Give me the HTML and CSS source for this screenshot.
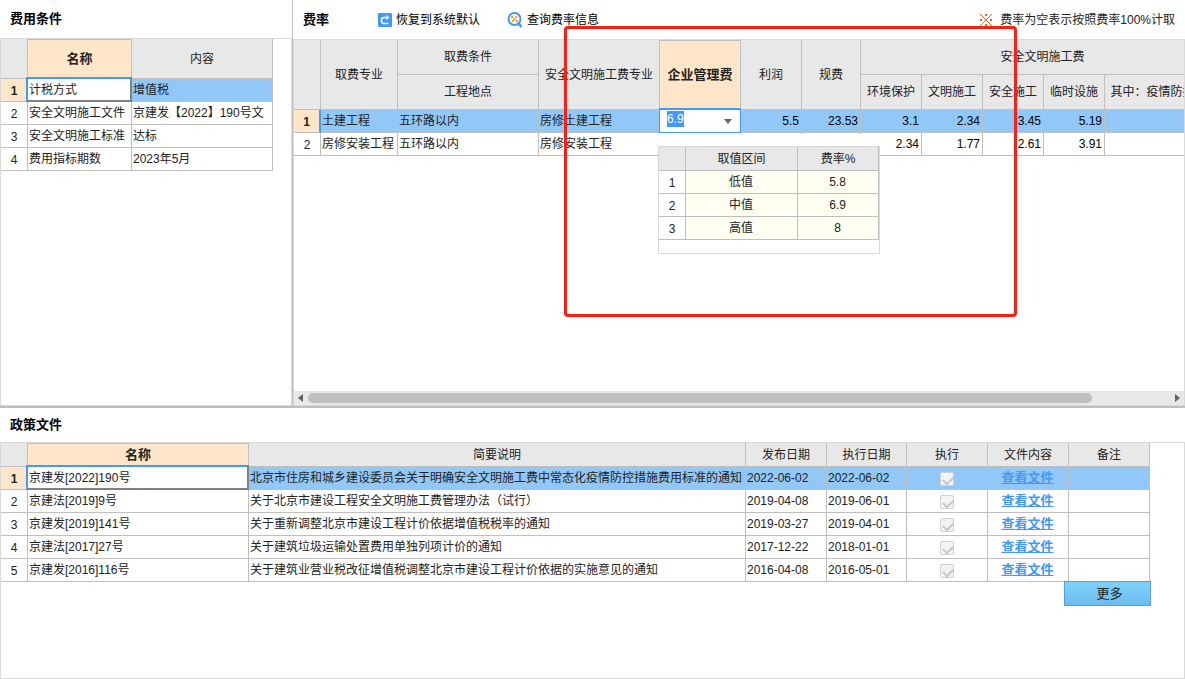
FILE: index.html
```html
<!DOCTYPE html>
<html lang="zh-CN">
<head>
<meta charset="utf-8">
<title>费用条件</title>
<link rel="stylesheet" href="styles.css">
</head>
<body>
<div class="page">
  <div class="top">
    <section class="pane">
      <header class="pane-head pane-head-cond"><h2>费用条件</h2></header>
      <div class="box">
        <table class="grid cond">
          <colgroup><col class="w-no"><col class="w-104"><col class="w-141"></colgroup>
          <thead><tr><th></th><th class="current">名称</th><th>内容</th></tr></thead>
          <tbody>
            <tr class="selected"><th scope="row">1</th><td class="focus">计税方式</td><td>增值税</td></tr>
            <tr><th scope="row">2</th><td>安全文明施工文件</td><td>京建发【2022】190号文</td></tr>
            <tr><th scope="row">3</th><td>安全文明施工标准</td><td>达标</td></tr>
            <tr><th scope="row">4</th><td>费用指标期数</td><td>2023年5月</td></tr>
          </tbody>
        </table>
      </div>
    </section>

    <section class="pane rates">
      <header class="pane-head pane-head-rate">
        <h2>费率</h2>
        <button class="tool tool-reset" type="button">
          <svg width="14" height="14" viewBox="0 0 14 14" aria-hidden="true"><rect width="14" height="14" rx="1" fill="#4398fc"/><path d="M10.500 10.500H5.500A2.500 2.500 0 0 1 3.500 8V7A2.500 2.500 0 0 1 6 4.500H10" fill="none" stroke="#fff" stroke-width="1.500"/><path d="M8.500 2 11.500 4.500 8.500 7z" fill="#fff"/></svg>
          恢复到系统默认
        </button>
        <button class="tool" type="button">
          <svg width="16" height="16" viewBox="0 0 16 16" aria-hidden="true"><circle cx="7.500" cy="7" r="6" fill="#fff" stroke="#4398fc" stroke-width="2"/><path d="M11.500 11.500 14.500 15" stroke="#4398fc" stroke-width="2.400"/><path d="M10 4 5 10" stroke="#ff9a1f" stroke-width="1.400"/><circle cx="5.300" cy="5" r="1.300" fill="#ff9a1f"/><circle cx="9.800" cy="9" r="1.300" fill="#ff9a1f"/></svg>
          查询费率信息
        </button>
        <p class="note">
          <svg width="14" height="14" viewBox="0 0 14 14" aria-hidden="true"><path d="M1 1l12 12M13 1l-12 12" stroke="#f4631e" stroke-width="1"/><path d="M6 1h2v2H6zM6 11h2v2H6zM1 6h2v2H1zM11 6h2v2h-2z" fill="#f4631e"/></svg>
          费率为空表示按照费率100%计取
        </p>
      </header>
      <div class="box rate-box">
        <div class="rate-view">
          <table class="grid rate">
            <colgroup><col class="w-no"><col class="w-77"><col class="w-141"><col class="w-121"><col class="w-81"><col class="w-61"><col class="w-59"><col class="w-61"><col class="w-61"><col class="w-61"><col class="w-61"><col class="w-120"></colgroup>
            <thead>
              <tr><th rowspan="2"></th><th rowspan="2">取费专业</th><th>取费条件</th><th rowspan="2">安全文明施工费专业</th><th rowspan="2" class="current">企业管理费</th><th rowspan="2">利润</th><th rowspan="2">规费</th><th colspan="5">安全文明施工费</th></tr>
              <tr><th>工程地点</th><th>环境保护</th><th>文明施工</th><th>安全施工</th><th>临时设施</th><th>其中：疫情防控费用</th></tr>
            </thead>
            <tbody>
              <tr class="selected"><th scope="row" class="marker">1</th><td>土建工程</td><td>五环路以内</td><td>房修土建工程</td>
                <td class="editing">
                  <div class="combo">
                    <input id="fee" type="text" value="6.9" aria-label="企业管理费">
                    <button type="button" class="drop" aria-label="展开"><svg width="8" height="5" viewBox="0 0 8 5"><path d="M0 0h8L4 5z" fill="#666"/></svg></button>
                  </div>
                  <div class="popup">
                    <div class="popup-box">
                      <table class="grid options">
                        <colgroup><col class="w-no"><col class="w-112"><col class="w-81"></colgroup>
                        <thead><tr><th></th><th>取值区间</th><th>费率%</th></tr></thead>
                        <tbody>
                          <tr><th scope="row">1</th><td>低值</td><td>5.8</td></tr>
                          <tr><th scope="row">2</th><td>中值</td><td>6.9</td></tr>
                          <tr><th scope="row">3</th><td>高值</td><td>8</td></tr>
                        </tbody>
                      </table>
                    </div>
                  </div>
                </td>
                <td class="num">5.5</td><td class="num">23.53</td><td class="num">3.1</td><td class="num">2.34</td><td class="num">3.45</td><td class="num">5.19</td><td></td></tr>
              <tr><th scope="row">2</th><td>房修安装工程</td><td>五环路以内</td><td>房修安装工程</td><td></td><td class="editable"></td><td></td><td class="num">2.34</td><td class="num">1.77</td><td class="num">2.61</td><td class="num">3.91</td><td></td></tr>
            </tbody>
          </table>
        </div>
        <div class="scrollbar">
          <button type="button" aria-label="向左滚动"><svg width="5" height="8" viewBox="0 0 5 8"><path d="M5 0v8L0 4z" fill="#606266"/></svg></button>
          <div class="track"><div class="thumb"></div></div>
          <button type="button" aria-label="向右滚动"><svg width="5" height="8" viewBox="0 0 5 8"><path d="M0 0v8l5-4z" fill="#606266"/></svg></button>
        </div>
      </div>
    </section>
  </div>

  <section class="pane policy">
    <header class="pane-head pane-head-policy"><h2>政策文件</h2></header>
    <div class="box">
      <div class="policy-list">
        <table class="grid files">
          <colgroup><col class="w-no"><col class="w-221"><col class="w-497"><col class="w-81"><col class="w-80"><col class="w-81"><col class="w-81"><col class="w-81"></colgroup>
          <thead><tr><th></th><th class="current">名称</th><th>简要说明</th><th>发布日期</th><th>执行日期</th><th>执行</th><th>文件内容</th><th>备注</th></tr></thead>
          <tbody>
            <tr class="selected"><th scope="row">1</th><td class="focus">京建发[2022]190号</td><td>北京市住房和城乡建设委员会关于明确安全文明施工费中常态化疫情防控措施费用标准的通知</td><td>2022-06-02</td><td>2022-06-02</td><td class="mid"><input type="checkbox" checked disabled aria-label="执行"></td><td class="mid"><a href="#">查看文件</a></td><td></td></tr>
            <tr><th scope="row">2</th><td>京建法[2019]9号</td><td>关于北京市建设工程安全文明施工费管理办法（试行）</td><td>2019-04-08</td><td>2019-06-01</td><td class="mid"><input type="checkbox" checked disabled aria-label="执行"></td><td class="mid"><a href="#">查看文件</a></td><td></td></tr>
            <tr><th scope="row">3</th><td>京建发[2019]141号</td><td>关于重新调整北京市建设工程计价依据增值税税率的通知</td><td>2019-03-27</td><td>2019-04-01</td><td class="mid"><input type="checkbox" checked disabled aria-label="执行"></td><td class="mid"><a href="#">查看文件</a></td><td></td></tr>
            <tr><th scope="row">4</th><td>京建法[2017]27号</td><td>关于建筑垃圾运输处置费用单独列项计价的通知</td><td>2017-12-22</td><td>2018-01-01</td><td class="mid"><input type="checkbox" checked disabled aria-label="执行"></td><td class="mid"><a href="#">查看文件</a></td><td></td></tr>
            <tr><th scope="row">5</th><td>京建发[2016]116号</td><td>关于建筑业营业税改征增值税调整北京市建设工程计价依据的实施意见的通知</td><td>2016-04-08</td><td>2016-05-01</td><td class="mid"><input type="checkbox" checked disabled aria-label="执行"></td><td class="mid"><a href="#">查看文件</a></td><td></td></tr>
          </tbody>
        </table>
        <button class="more" type="button">更多</button>
      </div>
    </div>
  </section>
  <div class="highlight"></div>
</div>
<script src="main.js"></script>
</body>
</html>
```
FILE: styles.css
```css
* { box-sizing: border-box; }

body {
  margin: 0;
  background: #fff;
  color: #222;
  font: 12px/16px "Liberation Sans", "Noto Sans CJK SC", sans-serif;
}

button, input { font: inherit; color: inherit; }
button { border: 0; padding: 0; background: none; }

.page {
  position: relative;
  display: flex;
  flex-direction: column;
  min-height: 100vh;
  overflow: hidden;
}

.top {
  display: grid;
  grid-template-columns: 292px minmax(0, 1fr);
  min-height: 408px;
  border-bottom: 2px solid #bfbfbf;
}

.pane { display: flex; flex-direction: column; min-width: 0; }
.rates { border-left: 1px solid #bfbfbf; }
.policy { flex: 1; }

.pane-head { display: flex; align-items: center; padding: 0 10px; }
.pane-head-cond { height: 38px; }
.pane-head-rate { height: 39px; }
.pane-head-policy { height: 34px; }

h2 { margin: 0; font-size: 13px; line-height: 16px; color: #000; }

.tool { display: flex; align-items: center; gap: 4px; margin-left: 27px; color: #000; }
.tool-reset { margin-left: 49px; }

.note { display: flex; align-items: center; gap: 7px; margin: 0 0 0 auto; }

.box { flex: 1; border: 1px solid #d9d9d9; min-width: 0; }

/* data grids */
.grid { border-collapse: separate; border-spacing: 0; table-layout: fixed; width: 0; }
.grid th, .grid td {
  height: 23px;
  padding: 0;
  border: solid #bfbfbf;
  border-width: 0 1px 1px 0;
  white-space: nowrap;
  overflow: visible;
}
.grid td { padding: 0 2px 0 1px; position: relative; }
.grid th { font-weight: normal; text-align: center; background: #e8e8e8; }
.grid tbody th { padding-top: 2px; background: #fff; }
.grid thead .current {
  background: #ffe6c8;
  border-top-width: 1px;
  font-size: 13px;
  font-weight: bold;
}
.grid .selected td { background: #91c8f7; }
.grid .selected > th { background: #ffe6c8; font-weight: bold; }
.grid .num { text-align: right; color: #000; }
.grid .mid { text-align: center; }
.grid td.focus { background: #fff; }
.focus::after {
  content: "";
  position: absolute;
  inset: -2px -1px -1px -2px;
  border: 2px solid;
  border-color: #4398fc #808080 #808080 #4398fc;
}
.grid .marker { border-right: 2px solid #4398fc; }
.grid .editable { background: #fffff2; }

.cond thead th { height: 40px; }
.rate thead th { height: 35px; }
.files thead th { height: 24px; }

.w-no { width: 27px; }
.w-59 { width: 59px; }
.w-61 { width: 61px; }
.w-77 { width: 77px; }
.w-80 { width: 80px; }
.w-81 { width: 81px; }
.w-104 { width: 104px; }
.w-112 { width: 112px; }
.w-120 { width: 120px; }
.w-121 { width: 121px; }
.w-141 { width: 141px; }
.w-221 { width: 221px; }
.w-497 { width: 497px; }

/* rate grid */
.rate-box { display: flex; flex-direction: column; }
.rate-view { flex: 1; overflow: hidden; }

.combo {
  position: absolute;
  inset: -2px -1px -1px -1px;
  display: flex;
  justify-content: space-between;
  align-items: flex-start;
  padding: 1px 8px 1px 7px;
  border: 1px solid #4398fc;
  border-top-width: 2px;
  background: #fff;
}
.combo input { width: 40px; height: 16px; border: 0; padding: 0; outline: 0; background: none; }
.combo input::selection { background: #4398fc; color: #fff; }
.drop { display: flex; align-self: center; }

.popup {
  position: absolute;
  z-index: 1;
  top: 100%;
  left: -2px;
  padding-top: 12px;
  background: #fff;
  margin-top: 2px;
}
.popup-box { padding-bottom: 13px; border: 1px solid #d9d9d9; }
.options tbody td { height: 23px; text-align: center; }
.grid.options tbody td { background: #fffff2; }
.grid.options thead th { height: 24px; padding: 0; background: #e8e8e8; }
.grid.options tbody th { background: #fff; font-weight: normal; }

.scrollbar { display: flex; align-items: center; height: 14px; padding: 0 4px; background: #e8e8e8; }
.scrollbar button { display: flex; }
.track { flex: 1; padding: 0 5px; }
.thumb { width: 91%; height: 10px; border-radius: 5px; background: #bfbfbf; }

/* policy files */
.policy-list { display: flex; flex-direction: column; width: max-content; }
.policy-list .files { width: 1149px; }
.grid a { color: #4398fc; font-size: 13px; font-weight: bold; text-decoration: underline; }

input[type="checkbox"] {
  appearance: none;
  display: block;
  width: 14px;
  height: 14px;
  margin: 1px auto 0;
  border: 1px solid #d2d2d2;
  border-radius: 2px;
  background: #f3f3f3;
}
input[type="checkbox"]::after {
  content: "";
  display: block;
  width: 8px;
  height: 5px;
  margin: 3px 2px;
  border: solid #c8c8c8;
  border-width: 0 0 2px 2px;
  transform: rotate(-45deg);
}

.more {
  align-self: flex-end;
  width: 87px;
  height: 25px;
  margin: -1px -1px 0 0;
  padding-left: 4px;
  border: 1px solid #5a9fdc;
  background: linear-gradient(#7cd3f9, #6dbcf0);
  font-size: 13px;
  position: relative;
}

.highlight {
  position: absolute;
  z-index: 2;
  left: 564px;
  top: 26px;
  width: 453px;
  height: 291px;
  border: 3px solid #ff1e14;
  border-radius: 4px;
  pointer-events: none;
}
```
FILE: main.js
```js
const fee = document.getElementById("fee");
fee.focus();
fee.select();
```
